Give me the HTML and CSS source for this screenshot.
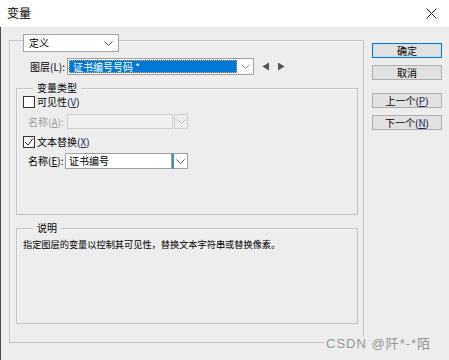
FILE: index.html
```html
<!DOCTYPE html>
<html lang="zh">
<head>
<meta charset="utf-8">
<link rel="stylesheet" href="styles.css">
</head>
<body>
<div class="window">
  <div class="titlebar">
    <span class="title">变量</span>
    <svg class="close" width="11" height="11" viewBox="0 0 11 11"><path d="M0.5 0.5 L10.5 10.5 M10.5 0.5 L0.5 10.5" stroke="#222" stroke-width="1"/></svg>
  </div>
  <div class="body">
    <div class="outer">
      <div class="def-select">
        <span>定义</span>
        <svg class="chev" width="9" height="5" viewBox="0 0 9 5"><path d="M0.5 0.5 L4.5 4.5 L8.5 0.5" fill="none" stroke="#555"/></svg>
      </div>
      <div class="layer-row">
        <span class="lbl layer-lbl">图层(L):</span>
        <div class="layer-select">
          <div class="layer-value"><span>证书编号号码 *</span></div>
          <div class="layer-drop"><svg width="9" height="5" viewBox="0 0 9 5"><path d="M0.5 0.5 L4.5 4.5 L8.5 0.5" fill="none" stroke="#999"/></svg></div>
        </div>
        <svg class="arrow" width="8" height="9" viewBox="0 0 8 9"><path d="M7 0.5 L7 8.5 L0.5 4.5 Z" fill="#555"/></svg>
        <svg class="arrow" width="8" height="9" viewBox="0 0 8 9"><path d="M1 0.5 L1 8.5 L7.5 4.5 Z" fill="#555"/></svg>
      </div>
      <div class="group group-type">
        <div class="group-title">变量类型</div>
        <div class="check-row row-vis">
          <span class="checkbox"></span>
          <span class="lbl">可见性(<u class="mn">V</u>)</span>
        </div>
        <div class="field-row row-name-a">
          <span class="lbl disabled">名称(<u>A</u>):</span>
          <div class="input input-disabled"></div>
          <div class="drop drop-disabled"><svg width="9" height="5" viewBox="0 0 9 5"><path d="M0.5 0.5 L4.5 4.5 L8.5 0.5" fill="none" stroke="#bbb"/></svg></div>
        </div>
        <div class="check-row row-text">
          <span class="checkbox"><svg width="10" height="10" viewBox="0 0 10 10"><path d="M1 5 L4 8 L9 1.5" fill="none" stroke="#222" stroke-width="1"/></svg></span>
          <span class="lbl">文本替换(<u class="mn">X</u>)</span>
        </div>
        <div class="field-row row-name-e">
          <span class="lbl">名称(<u>E</u>):</span>
          <div class="input input-text">证书编号</div>
          <div class="drop drop-focus"><svg width="9" height="5" viewBox="0 0 9 5"><path d="M0.5 0.5 L4.5 4.5 L8.5 0.5" fill="none" stroke="#555"/></svg></div>
        </div>
      </div>
      <div class="group group-desc">
        <div class="group-title">说明</div>
        <p class="desc">指定图层的变量以控制其可见性，替换文本字符串或替换像素。</p>
      </div>
    </div>
    <div class="buttons">
      <button class="btn btn-default">确定</button>
      <button class="btn">取消</button>
      <button class="btn btn-gap">上一个(<u class="mn">P</u>)</button>
      <button class="btn">下一个(<u class="mn">N</u>)</button>
    </div>
  </div>
  <div class="watermark">CSDN @阡*-*陌</div>
</div>
</body>
</html>
```
FILE: styles.css
```css
* { box-sizing: border-box; }
html, body { margin: 0; padding: 0; }
body {
  width: 449px;
  height: 360px;
  overflow: hidden;
  background: #ededed;
  font-family: "Noto Sans CJK SC", "Microsoft YaHei", sans-serif;
  font-size: 10px;
  color: #000;
}
.window {
  position: relative;
  width: 449px;
  height: 360px;
  background: #ededed;
}
.titlebar {
  height: 27px;
  background: #fff;
  display: flex;
  align-items: center;
  justify-content: space-between;
  padding: 0 12px 1px 7px;
}
.title { font-size: 12px; line-height: 14px; }
.close { display: block; }
.body {
  height: 333px;
  border-left: 1px solid #4a4a4a;
  display: flex;
  gap: 8px;
  padding: 13px 0 0 8px;
}
.outer {
  width: 355px;
  height: 303px;
  border: 1px solid #c3c3c3;
  box-shadow: inset 1px 1px 0 #f7f7f7;
  flex: none;
}
.def-select {
  margin: -7px 0 0 13px;
  width: 96px;
  height: 18px;
  background: #fff;
  border: 1px solid #a5a5a5;
  display: flex;
  align-items: center;
  justify-content: space-between;
  padding: 0 5px 0 5px;
  line-height: 12px;
}
.chev { display: block; margin-top: 1px; }
.layer-row {
  display: flex;
  align-items: center;
  margin: 6px 0 0 20px;
  height: 17px;
}
.layer-lbl { width: 37px; flex: none; }
.lbl { line-height: 12px; white-space: nowrap; }
.layer-select {
  width: 187px;
  height: 17px;
  border: 1px solid #a0a0a0;
  background: #fff;
  display: flex;
  padding: 1px 0 1px 1px;
  flex: none;
}
.layer-value {
  width: 168px;
  background: #0078d7;
  border: 1px dotted #d9a05b;
  color: #fff;
  padding-left: 3px;
  line-height: 12px;
}
.layer-drop {
  flex: 1;
  display: flex;
  align-items: center;
  justify-content: center;
}
.layer-drop svg, .drop svg { display: block; }
.arrow { display: block; margin-left: 8px; }
.arrow + .arrow { margin-left: 7px; }
.group {
  margin-left: 6px;
  width: 342px;
  border: 1px solid #c3c3c3;
  box-shadow: inset 1px 1px 0 #f7f7f7;
  padding: 0 0 0 6px;
}
.group-type { margin-top: 13px; height: 127px; }
.group-desc { margin-top: 13px; height: 96px; }
.group-title {
  width: fit-content;
  margin: -7px 0 0 10px;
  padding: 0 4px;
  background: #ededed;
  line-height: 12px;
  height: 12px;
}
.check-row {
  display: flex;
  align-items: center;
  gap: 2px;
  height: 12px;
}
.row-vis { margin-top: 2px; }
.row-text { margin-top: 7px; }
.checkbox {
  width: 12px;
  height: 12px;
  border: 1px solid #333;
  background: #fff;
  display: flex;
  align-items: center;
  justify-content: center;
  flex: none;
}
.checkbox svg { display: block; }
.field-row {
  display: flex;
  align-items: center;
  padding-left: 5px;
}
.row-name-a { margin-top: 6px; height: 15px; }
.row-name-e { margin-top: 5px; height: 16px; }
.row-name-a .lbl { width: 39px; }
.row-name-e .lbl { width: 37px; }
.disabled { color: #a0a0a0; }
.input {
  height: 100%;
  border: 1px solid #b5b5b5;
  flex: none;
}
.input-disabled {
  width: 106px;
  background: #f0f0f0;
  border-color: #cdcdcd;
}
.input-text {
  width: 107px;
  background: #fff;
  border-color: #a0a0a0;
  padding-left: 3px;
  line-height: 13px;
}
.drop {
  height: 100%;
  display: flex;
  align-items: center;
  justify-content: center;
  flex: none;
}
.drop-disabled {
  width: 14px;
  margin-left: 1px;
  border: 1px solid #cdcdcd;
  background: #ededed;
}
.drop-focus {
  width: 16px;
  border: 1px solid #a0a0a0;
  border-left: 2px solid #3b8fdc;
  background: #fff;
}
.desc {
  margin: 4px 0 0 0;
  line-height: 12px;
  font-size: 9.2px;
  white-space: nowrap;
}
.buttons {
  display: flex;
  flex-direction: column;
  gap: 7px;
  padding-top: 3px;
}
.btn {
  width: 70px;
  height: 15px;
  margin: 0;
  padding: 0;
  border: 1px solid #adadad;
  background: #e1e1e1;
  font-family: "Noto Sans CJK SC", sans-serif;
  font-size: 10px;
  line-height: 12px;
  color: #000;
}
.btn-default { border: 1px solid #0078d7; box-shadow: inset 0 0 0 1px #c9dff3; }
.btn-gap { margin-top: 6px; }
.mn { color: #1c2a6a; }
.watermark {
  position: absolute;
  left: 325px;
  top: 336px;
  padding: 0 1px;
  background: #ededed;
  color: #959595;
  font-family: "Liberation Sans", "Noto Sans CJK SC", sans-serif;
  font-size: 13px;
  letter-spacing: 1px;
  line-height: 16px;
}
```
